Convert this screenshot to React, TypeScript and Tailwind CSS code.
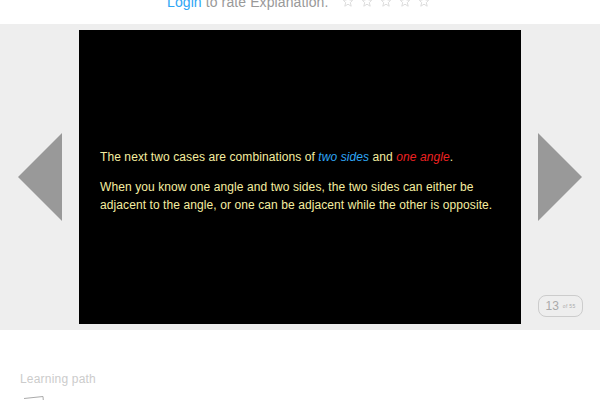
function Star() {
  return (
    <svg width="10" height="12" viewBox="0 0 10 12" fill="none" stroke="#dddddd" strokeWidth="1">
      <path d="M5 -4 L6.3 -0.2 L9.6 0.4 L7.3 2.6 L8.2 6.2 L5 4.2 L1.8 6.2 L2.7 2.6 L0.4 0.4 L3.7 -0.2 Z" />
    </svg>
  )
}

function Arrow({ right = false }: { right?: boolean }) {
  return (
    <svg width="44" height="88" viewBox="0 0 44 88" className="shrink-0">
      <path d={right ? 'M0 0 L44 44 L0 88 Z' : 'M44 0 L0 44 L44 88 Z'} fill="#999999" />
    </svg>
  )
}

export default function App() {
  return (
    <div className="w-[600px] h-[400px] overflow-hidden bg-white font-['Liberation_Sans',Arial,sans-serif]">
      {/* Rating strip */}
      <div className="h-6 overflow-hidden flex items-start pl-[167px]">
        <p className="text-sm leading-4 -mt-[6px] tracking-[0.1px] text-[#999999] whitespace-nowrap">
          <span className="text-[#2ea6f5]">Login</span> to rate Explanation.
        </p>
        <div className="flex gap-[9px] ml-[15px]">
          {[0, 1, 2, 3, 4].map((i) => (
            <Star key={i} />
          ))}
        </div>
      </div>

      {/* Slide viewer */}
      <div className="relative h-[306px] bg-[#eeeeee] flex items-start pl-[18px] pt-[6px]">
        <div className="mt-[103px]">
          <Arrow />
        </div>
        <div className="w-[442px] h-[294px] ml-[17px] bg-black flex flex-col justify-center px-[21px] pt-[7px] text-xs leading-[18px] tracking-[0.09px] text-[#f5eea0]">
          <p className="mb-[12px]">
            The next two cases are combinations of{' '}
            <em className="text-[#2ea6f5]">two sides</em> and{' '}
            <em className="text-[#ee2222]">one angle</em>.
          </p>
          <p>
            When you know one angle and two sides, the two sides can either be adjacent to the angle, or one can be adjacent while the other is opposite.
          </p>
        </div>
        <div className="mt-[103px] ml-[17px]">
          <Arrow right />
        </div>
        <div className="absolute left-[538px] top-[271px] w-[45px] h-[22px] border border-[#cccccc] rounded-lg flex items-center justify-center gap-[4px] text-[#aaaaaa]">
          <span className="text-xs leading-none">13</span>
          <span className="text-[5px] leading-none tracking-[0.3px]">of 55</span>
        </div>
      </div>

      {/* Learning path */}
      <div className="pl-5 pt-[42px]">
        <p className="text-xs leading-[14px] tracking-[0.2px] text-[#cccccc]">Learning path</p>
        <svg width="30" height="6" viewBox="0 0 30 6" fill="none" stroke="#aaaaaa" strokeWidth="1" className="mt-[9px] ml-[3px]">
          <path d="M1 3.5 L20 1.5 L20.5 8" />
        </svg>
      </div>
    </div>
  )
}
